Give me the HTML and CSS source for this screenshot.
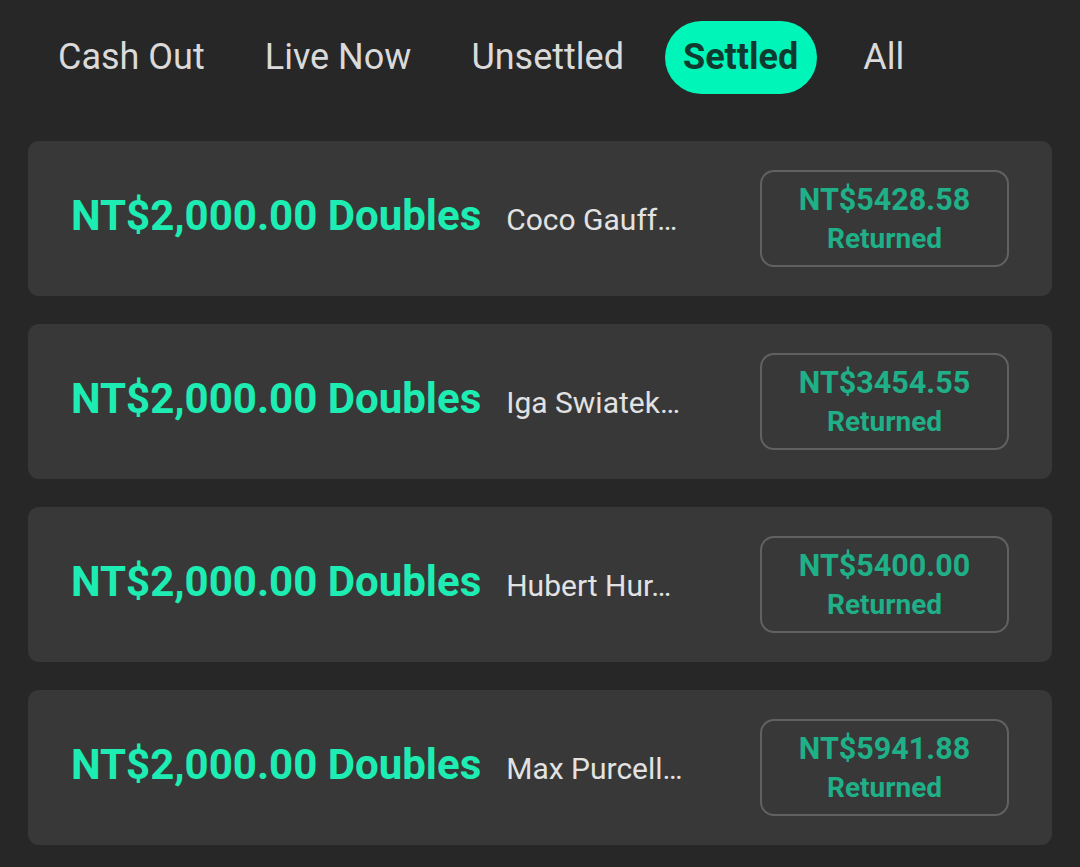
FILE: index.html
```html
<!DOCTYPE html>
<html lang="en">
<head>
<meta charset="utf-8">
<title>Bets - Settled</title>
<link rel="stylesheet" href="styles.css">
</head>
<body>
<nav class="tabs">
  <span class="tab">Cash Out</span>
  <span class="tab">Live Now</span>
  <span class="tab">Unsettled</span>
  <span class="tab tab-active">Settled</span>
  <span class="tab">All</span>
</nav>
<main class="bets">
  <section class="bet">
    <div class="bet-info">
      <span class="bet-title">NT$2,000.00 Doubles</span>
      <span class="bet-name">Coco Gauff…</span>
    </div>
    <div class="bet-return">
      <span class="return-amount">NT$5428.58</span>
      <span class="return-label">Returned</span>
    </div>
  </section>
  <section class="bet">
    <div class="bet-info">
      <span class="bet-title">NT$2,000.00 Doubles</span>
      <span class="bet-name">Iga Swiatek…</span>
    </div>
    <div class="bet-return">
      <span class="return-amount">NT$3454.55</span>
      <span class="return-label">Returned</span>
    </div>
  </section>
  <section class="bet">
    <div class="bet-info">
      <span class="bet-title">NT$2,000.00 Doubles</span>
      <span class="bet-name">Hubert Hur…</span>
    </div>
    <div class="bet-return">
      <span class="return-amount">NT$5400.00</span>
      <span class="return-label">Returned</span>
    </div>
  </section>
  <section class="bet">
    <div class="bet-info">
      <span class="bet-title">NT$2,000.00 Doubles</span>
      <span class="bet-name">Max Purcell…</span>
    </div>
    <div class="bet-return">
      <span class="return-amount">NT$5941.88</span>
      <span class="return-label">Returned</span>
    </div>
  </section>
</main>
</body>
</html>
```

FILE: styles.css
```css
* { box-sizing: border-box; }
html, body {
  margin: 0;
  padding: 0;
  background: #272727;
  font-family: Roboto, "Liberation Sans", sans-serif;
}
body {
  width: 1080px;
  height: 867px;
  overflow: hidden;
}
.tabs {
  display: flex;
  align-items: center;
  gap: 22px;
  padding: 21px 0 0 39px;
}
.tab {
  height: 73px;
  line-height: 73px;
  padding: 0 19px;
  font-size: 36px;
  color: #dadada;
  white-space: nowrap;
}
.tab-active {
  background: #00f5b8;
  color: #0f3a2f;
  font-weight: 700;
  border-radius: 37px;
  padding: 0 19px 0 18px;
}
.tab-active + .tab {
  margin-left: 5px;
}
.bets {
  display: flex;
  flex-direction: column;
  gap: 28px;
  padding: 47px 28px 0 28px;
}
.bet {
  height: 155px;
  background: #383838;
  border-radius: 11px;
  display: flex;
  align-items: center;
  justify-content: space-between;
  padding: 0 43px;
}
.bet-info {
  display: flex;
  align-items: baseline;
  gap: 25px;
  margin-top: -7px;
}
.bet-title {
  font-size: 42px;
  font-weight: 700;
  color: #1eedb3;
  white-space: nowrap;
}
.bet-name {
  font-size: 30px;
  color: #e2e2e2;
  white-space: nowrap;
  max-width: 185px;
  overflow: hidden;
  text-overflow: ellipsis;
}
.bet-return {
  width: 249px;
  height: 97px;
  border: 2px solid #616161;
  border-radius: 14px;
  display: flex;
  flex-direction: column;
  align-items: center;
  justify-content: center;
  font-weight: 700;
  line-height: 39px;
  color: #20b088;
}
.return-amount {
  font-size: 30.5px;
}
.return-label {
  font-size: 28px;
}
```
